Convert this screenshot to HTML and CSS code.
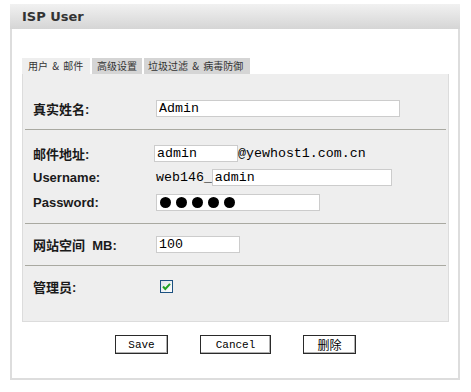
FILE: index.html
```html
<!DOCTYPE html>
<html lang="zh-CN">
<head>
    <meta charset="UTF-8">
    <title>ISP User</title>
    <link rel="stylesheet" href="styles.css">
</head>
<body>
    <div class="window">
        <div class="window-head">ISP User</div>
        <div class="window-body">

            <!-- Tabs -->
            <div class="tabs">
                <span class="tab active t-user">用户 &amp; 邮件</span>
                <span class="tab t-adv">高级设置</span>
                <span class="tab t-spam">垃圾过滤 &amp; 病毒防御</span>
            </div>

            <div class="panel">
                <div class="section first">
                    <div class="row">
                        <label class="label">真实姓名:</label>
                        <input class="field w-name" type="text" value="Admin">
                    </div>
                </div>
                <div class="sep"></div>

                <div class="section mail">
                    <div class="row">
                        <label class="label">邮件地址:</label>
                        <input class="field w-short shift" type="text" value="admin"><span class="mono">@yewhost1.com.cn</span>
                    </div>
                    <div class="row">
                        <label class="label">Username:</label>
                        <span class="mono">web146_</span><input class="field w-user" type="text" value="admin">
                    </div>
                    <div class="row pw-row">
                        <label class="label">Password:</label>
                        <div class="field w-pw pw">
                            <span></span><span></span><span></span><span></span><span></span>
                        </div>
                    </div>
                </div>
                <div class="sep"></div>

                <div class="section">
                    <div class="row">
                        <label class="label">网站空间 &nbsp;MB:</label>
                        <input class="field w-short" type="text" value="100">
                    </div>
                </div>
                <div class="sep"></div>

                <div class="section last">
                    <div class="row">
                        <label class="label">管理员:</label>
                        <span class="check">
                            <svg width="13" height="13" viewBox="0 0 13 13">
                                <defs>
                                    <linearGradient id="cb" x1="0" y1="0" x2="1" y2="1">
                                        <stop offset="0" stop-color="#dce2e8"/>
                                        <stop offset="1" stop-color="#ffffff"/>
                                    </linearGradient>
                                </defs>
                                <rect x="0.5" y="0.5" width="12" height="12" fill="url(#cb)" stroke="#1c5180"/>
                                <path d="M3 6.5 L5.3 9 L10 3.8" fill="none" stroke="#21a121" stroke-width="2"/>
                            </svg>
                        </span>
                    </div>
                </div>
            </div>

            <div class="buttons">
                <button class="btn">Save</button>
                <button class="btn wide">Cancel</button>
                <button class="btn cn">删除</button>
            </div>
        </div>
    </div>
</body>
</html>
```

FILE: styles.css
```css
body {
    margin: 0;
    background: #fff;
    font-family: "Liberation Sans", "Noto Sans CJK SC", sans-serif;
    color: #1a1a1a;
}
.window {
    width: 450px;
    margin: 4px 0 0 10px;
}
.window-head {
    height: 25px;
    line-height: 25px;
    padding-left: 12px;
    background: linear-gradient(#f1f1f1, #d5d5d5);
    font-family: "DejaVu Sans", sans-serif;
    font-size: 13px;
    font-weight: bold;
    color: #333;
}
.window-body {
    border: 2px solid #dddddd;
    border-top: none;
    padding: 29px 9px 24px 10px;
}
.tabs {
    display: flex;
    gap: 2px;
    height: 16px;
}
.tab {
    box-sizing: border-box;
    padding-left: 5px;
    line-height: 16px;
    font-family: "Noto Sans CJK SC", sans-serif;
    font-size: 10px;
    word-spacing: 2px;
    white-space: nowrap;
    color: #333;
    background: #d5d5d5;
}
.tab.active {
    background: #eeeeee;
}
.t-user { width: 68px; padding-left: 6px; }
.t-adv { width: 50px; }
.t-spam { width: 106px; padding-left: 4px; }
.panel {
    width: 427px;
    box-sizing: border-box;
    background: #eeeeee;
    border: 1px solid #dcdcdc;
    border-top: none;
    padding-left: 10px;
}
.section {
    padding: 12px 0;
}
.section.first {
    padding-top: 26px;
}
.section.mail {
    padding-top: 15px;
}
.section.last {
    padding-top: 12px;
    padding-bottom: 26px;
}
.sep {
    height: 1px;
    background: #a9a9a1;
    margin: 0 2px 0 -8px;
}
.row {
    display: flex;
    align-items: center;
    height: 17px;
}
.mail .row + .row {
    margin-top: 7px;
}
.mail .pw-row {
    margin-top: 8px !important;
}
.label {
    width: 123px;
    flex-shrink: 0;
    font-size: 13px;
    font-weight: bold;
}
.field {
    height: 17px;
    box-sizing: border-box;
    border: 1px solid #cccccc;
    background: #fff;
    padding: 0 2px;
    margin: 0;
    font-family: "Liberation Mono", monospace;
    font-size: 13.3px;
    color: #000;
    outline: none;
}
.mono {
    font-family: "Liberation Mono", monospace;
    font-size: 13.3px;
    color: #000;
}
.w-name { width: 244px; }
.w-short { width: 84px; }
.w-user { width: 180px; }
.w-pw { width: 164px; }
.shift { margin-left: -2px; }
.pw {
    display: flex;
    align-items: center;
    gap: 5px;
    padding-left: 3px;
}
.pw span {
    width: 11px;
    height: 11px;
    border-radius: 50%;
    background: #000;
}
.check {
    display: flex;
    margin-left: 4px;
}
.buttons {
    display: flex;
    justify-content: center;
    gap: 32px;
    margin-top: 13px;
}
.btn {
    width: 53px;
    height: 19px;
    padding: 0;
    background: #fff;
    border: 1px solid #2a2a2a;
    box-shadow: inset -1px -1px 0 #b0b0b0;
    font-family: "Liberation Mono", monospace;
    font-size: 11px;
    color: #000;
}
.btn.wide {
    width: 71px;
}
.btn.cn {
    font-family: "Noto Sans CJK SC", sans-serif;
    font-size: 12px;
    line-height: 15px;
}
```
